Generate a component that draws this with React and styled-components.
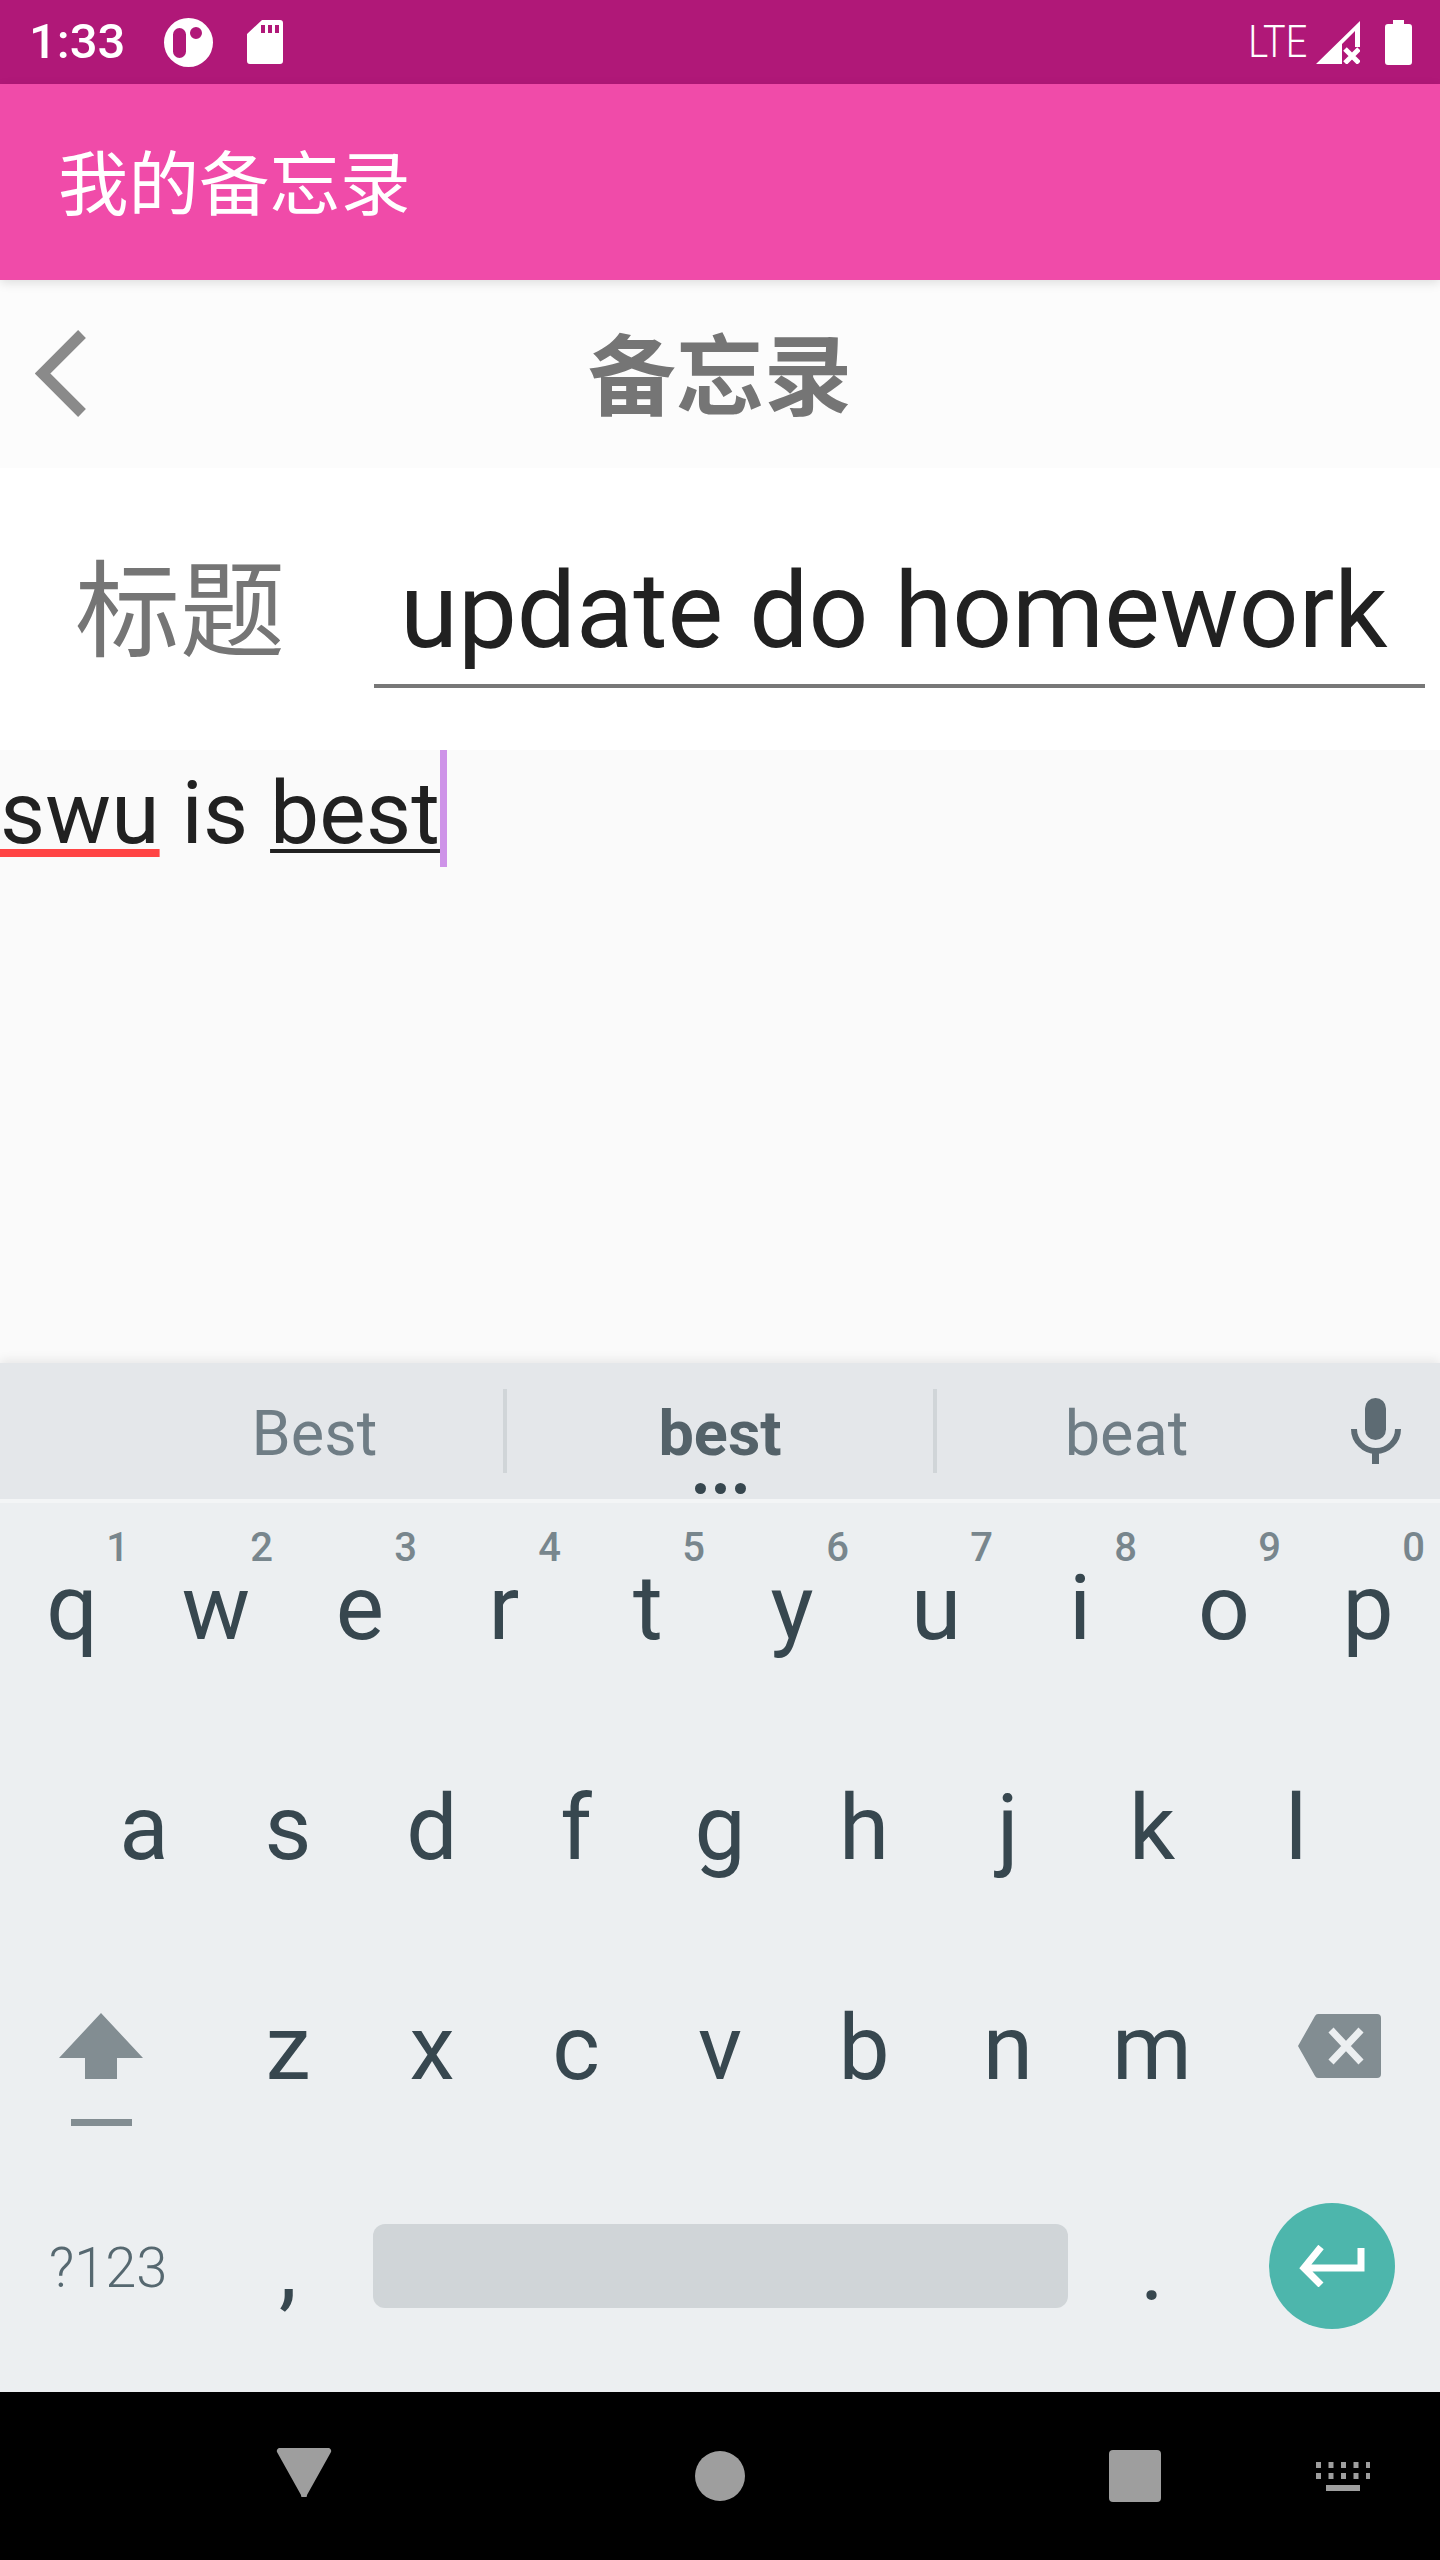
import React from 'react';
import styled, { createGlobalStyle } from 'styled-components';

const Global = createGlobalStyle`
  html, body { margin: 0; padding: 0; background: #ffffff; }
  body { font-family: Roboto, "Noto Sans CJK SC", sans-serif; }
`;

const CJK = `"Noto Sans CJK SC", "Noto Sans", sans-serif`;

const Screen = styled.div`
  width: 1440px;
  height: 2560px;
  display: flex;
  flex-direction: column;
  overflow: hidden;
  background: #fafafa;
`;

const StatusBar = styled.div`
  height: 84px;
  flex: none;
  background: #b01878;
  display: flex;
  align-items: center;
  padding: 0 28px 0 29px;
  color: #fff;
  box-sizing: border-box;
`;
const Time = styled.span`
  font: 500 49px/84px Roboto, sans-serif;
  width: 135px;
`;
const StatusGroup = styled.div`
  display: flex;
  align-items: center;
`;
const Spacer = styled.div`
  flex: 1;
`;
const Glyph = styled.svg`
  display: block;
  flex: none;
  margin-left: ${p => p.$ml || 0}px;
  margin-top: ${p => p.$mt || 0}px;
`;
const Lte = styled.span`
  display: inline-block;
  font: 300 45px/84px Roboto, sans-serif;
  margin-right: 9px;
  transform: scaleX(0.84);
  transform-origin: right center;
`;

const AppBar = styled.div`
  height: 196px;
  flex: none;
  box-sizing: border-box;
  background: #f04ba9;
  position: relative;
  z-index: 2;
  box-shadow: 0 3px 10px rgba(0, 0, 0, 0.12);
  display: flex;
  align-items: center;
  padding: 0 0 6px 58px;
  color: #fff;
  font: 400 70.5px/100px ${CJK};
`;

const Header = styled.div`
  height: 188px;
  flex: none;
  box-sizing: border-box;
  padding-bottom: 8px;
  background: #fcfcfc;
  display: grid;
  grid-template-columns: 1fr auto 1fr;
  align-items: center;
`;
const BackButton = styled.div`
  padding: 8px 0 0 35px;
`;
const HeaderTitle = styled.div`
  font: 700 88px/120px ${CJK};
  color: #757575;
`;

const FormRow = styled.div`
  height: 282px;
  flex: none;
  background: #fff;
  box-sizing: border-box;
  padding-top: 74px;
  display: grid;
  grid-template-columns: 374px 1051px;
  align-items: start;
`;
const FieldLabel = styled.label`
  padding-left: 75px;
  margin-top: -8px;
  font: 400 105px/136px ${CJK};
  color: #757575;
`;
const FieldInput = styled.div`
  box-sizing: border-box;
  height: 146px;
  padding: 0 0 0 26px;
  border-bottom: 4px solid #777;
  font: 400 105px/140px Roboto, sans-serif;
  color: #212121;
  white-space: nowrap;
`;

const Editor = styled.div`
  flex: 1;
  background: #fafafa;
  display: flex;
  align-items: flex-start;
`;
const EditorText = styled.div`
  font: 400 87.5px/117px Roboto, sans-serif;
  letter-spacing: 0.15px;
  color: #212121;
  padding-top: 5px;
  white-space: pre;
`;
const Word = styled.span`
  text-decoration: underline;
  text-decoration-color: ${p => p.$line};
  text-decoration-thickness: ${p => p.$thick}px;
  text-underline-offset: 6px;
  text-decoration-skip-ink: none;
`;
const Caret = styled.div`
  width: 7px;
  height: 117px;
  background: #ce93e8;
  flex: none;
`;

const Keyboard = styled.div`
  height: 1029px;
  flex: none;
  background: #eceff1;
  box-shadow: 0 -3px 10px rgba(0, 0, 0, 0.08);
`;
const Suggestions = styled.div`
  height: 136px;
  background: #e4e7ea;
  border-bottom: 4px solid #f3f5f6;
  display: grid;
  grid-template-columns: 383px 4px 426px 4px 379px 1fr;
  padding-left: 120px;
  align-items: center;
`;
const Suggestion = styled.div`
  position: relative;
  text-align: center;
  padding: 6px 0 0 ${p => p.$shift || 0}px;
  font: ${p => (p.$main ? 700 : 400)} 63px/100px Roboto, sans-serif;
  color: ${p => (p.$main ? '#546269' : '#6f7d85')};
`;
const Dots = styled.div`
  position: absolute;
  left: 0;
  right: 0;
  top: 105px;
  display: flex;
  justify-content: center;
  gap: 9px;
`;
const Dot = styled.i`
  width: 11px;
  height: 11px;
  border-radius: 50%;
  background: #37474f;
`;
const Divider = styled.div`
  height: 84px;
  background: #d0d5d8;
`;
const MicCell = styled.div`
  display: flex;
  justify-content: center;
  margin-left: -4px;
`;

const KeyRow = styled.div`
  height: 220px;
  display: grid;
  grid-template-columns: ${p => p.$cols};
`;
const Key = styled.div`
  position: relative;
  box-sizing: border-box;
  padding-top: ${p => p.$top ?? 55}px;
  display: flex;
  justify-content: center;
  align-items: flex-start;
  font: ${p => p.$small ? '300 56px/100px' : '400 91px/100px'} Roboto, sans-serif;
  color: ${p => p.$small ? '#566870' : '#37474f'};
`;
const Hint = styled.span`
  position: absolute;
  top: 22px;
  right: 15px;
  font: 500 40px/46px Roboto, sans-serif;
  color: #78868d;
`;
const Spacebar = styled.div`
  width: 695px;
  height: 84px;
  border-radius: 12px;
  background: #d0d5d8;
`;
const EnterButton = styled.div`
  width: 126px;
  height: 126px;
  border-radius: 50%;
  background: #4db6ac;
  display: flex;
  align-items: center;
  justify-content: center;
`;

const NavBar = styled.div`
  height: 168px;
  flex: none;
  background: #000;
  display: flex;
  align-items: center;
  padding-left: 276px;
`;

const Row1 = [['q','1'],['w','2'],['e','3'],['r','4'],['t','5'],['y','6'],['u','7'],['i','8'],['o','9'],['p','0']];
const Row2 = ['a','s','d','f','g','h','j','k','l'];
const Row3 = ['z','x','c','v','b','n','m'];

const KeyDots = () => {
  const xs = [0, 12.5, 25, 37.5, 50];
  return (
    <Glyph $ml={155} width="54" height="29" viewBox="0 0 54 29">
      {xs.map(x => <rect key={`a${x}`} x={x} y="0" width="5" height="6" fill="#9e9e9e" />)}
      {xs.map(x => <rect key={`b${x}`} x={x} y="11" width="5" height="6" fill="#9e9e9e" />)}
      <rect x="10" y="23" width="34" height="6" fill="#9e9e9e" />
    </Glyph>
  );
};

export default function App() {
  return (
    <Screen>
      <Global />
      <StatusBar>
        <Time>1:33</Time>
        <Glyph width="49" height="49" viewBox="0 0 49 49">
          <path fillRule="evenodd" fill="#fff" d="M24.5 0a24.5 24.5 0 1 0 0 49a24.5 24.5 0 1 0 0-49ZM15.5 10a6.5 6.5 0 0 1 6.5 6.5v17a6.5 6.5 0 0 1-13 0v-17a6.5 6.5 0 0 1 6.5-6.5ZM32 9a6 6 0 1 1 0 12a6 6 0 1 1 0-12Z" />
        </Glyph>
        <Glyph $ml={34} width="36" height="44" viewBox="0 0 36 44">
          <path fill="#fff" fillRule="evenodd" d="M15 0H33a3 3 0 0 1 3 3V41a3 3 0 0 1-3 3H3a3 3 0 0 1-3-3V14ZM14 5v8h4V5ZM21 5v8h4V5ZM28 5v8h4V5Z" />
        </Glyph>
        <Spacer />
        <StatusGroup>
          <Lte>LTE</Lte>
          <Glyph width="44" height="43" viewBox="0 0 44 43">
            <path fill="#fff" fillRule="evenodd" d="M0 43L44 0V26H39V10L26 23V43Z" />
            <path stroke="#fff" strokeWidth="5" d="M29 28L43 42M43 28L29 42" fill="none" />
          </Glyph>
          <Glyph $ml={25} width="27" height="45" viewBox="0 0 27 45">
            <path fill="#fff" d="M8 0H19V4H24a3 3 0 0 1 3 3V42a3 3 0 0 1-3 3H3a3 3 0 0 1-3-3V7a3 3 0 0 1 3-3H8Z" />
          </Glyph>
        </StatusGroup>
      </StatusBar>

      <AppBar>我的备忘录</AppBar>

      <Header>
        <BackButton>
          <Glyph width="52" height="88" viewBox="0 0 52 88">
            <path d="M47 4L7.5 43.5L47 83" fill="none" stroke="#8a8a8a" strokeWidth="11" />
          </Glyph>
        </BackButton>
        <HeaderTitle>备忘录</HeaderTitle>
        <div />
      </Header>

      <FormRow>
        <FieldLabel>标题</FieldLabel>
        <FieldInput>update do homework</FieldInput>
      </FormRow>

      <Editor>
        <EditorText>
          <Word $line="#ff4444" $thick={8}>swu</Word> is <Word $line="#212121" $thick={4}>best</Word>
        </EditorText>
        <Caret />
      </Editor>

      <Keyboard>
        <Suggestions>
          <Suggestion $shift={6}>Best</Suggestion>
          <Divider />
          <Suggestion $main>
            best
            <Dots><Dot /><Dot /><Dot /></Dots>
          </Suggestion>
          <Divider />
          <Suggestion>beat</Suggestion>
          <MicCell>
            <Glyph width="50" height="66" viewBox="0 0 50 66">
              <rect x="14" y="0" width="21" height="42" rx="10.5" fill="#5d6b73" />
              <path d="M3 31c0 12 10 22 22 22s22-10 22-22" fill="none" stroke="#5d6b73" strokeWidth="6" />
              <rect x="21" y="50" width="7" height="16" fill="#5d6b73" />
            </Glyph>
          </MicCell>
        </Suggestions>

        <KeyRow $cols="repeat(10, 144px)">
          {Row1.map(([k, n]) => <Key key={k}>{k}<Hint>{n}</Hint></Key>)}
        </KeyRow>
        <KeyRow $cols="72px repeat(9, 144px)">
          <div />
          {Row2.map(k => <Key key={k}>{k}</Key>)}
        </KeyRow>
        <KeyRow $cols="216px repeat(7, 144px) 1fr">
          <Key $top={70}>
            <Glyph $ml={-14} width="84" height="113" viewBox="0 0 84 113">
              <path fill="#828d92" d="M42 0L84 45H58V66H26V45H0Z" />
              <rect x="12" y="106" width="61" height="7" fill="#828d92" />
            </Glyph>
          </Key>
          {Row3.map(k => <Key key={k}>{k}</Key>)}
          <Key $top={71}>
            <Glyph $ml={14} width="83" height="64" viewBox="0 0 83 64">
              <path fill="#828d92" d="M20 0H79a4 4 0 0 1 4 4V60a4 4 0 0 1-4 4H20a4 4 0 0 1-3-2L0 32L17 2a4 4 0 0 1 3-2Z" />
              <path d="M33 16L63 48M63 16L33 48" stroke="#eceff1" strokeWidth="7" fill="none" />
            </Glyph>
          </Key>
        </KeyRow>
        <KeyRow $cols="216px 144px 720px 144px 1fr">
          <Key $small>?123</Key>
          <Key>,</Key>
          <Key $top={61}><Spacebar /></Key>
          <Key>.</Key>
          <Key $top={40}>
            <EnterButton>
              <Glyph width="66" height="42" viewBox="0 0 66 42">
                <path d="M62 3V23H6M22 2L5 23L22 40" fill="none" stroke="#fff" strokeWidth="7" />
              </Glyph>
            </EnterButton>
          </Key>
        </KeyRow>
      </Keyboard>

      <NavBar>
        <Glyph $mt={-8} width="56" height="49" viewBox="0 0 56 49">
          <path fill="#9e9e9e" d="M4 0H52a3 3 0 0 1 3 4L31 47a3 3 0 0 1-6 0L1 4a3 3 0 0 1 3-4Z" />
        </Glyph>
        <Glyph $ml={363} width="50" height="50" viewBox="0 0 50 50"><circle cx="25" cy="25" r="25" fill="#9e9e9e" /></Glyph>
        <Glyph $ml={364} width="52" height="52" viewBox="0 0 52 52"><rect width="52" height="52" rx="4" fill="#9e9e9e" /></Glyph>
        <KeyDots />
      </NavBar>
    </Screen>
  );
}
